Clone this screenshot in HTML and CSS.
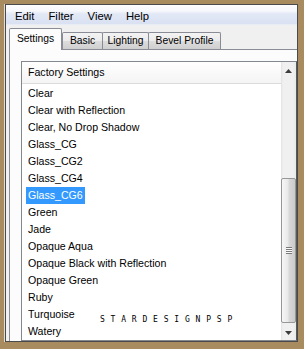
FILE: index.html
```html
<!DOCTYPE html>
<html>
<head>
<meta charset="utf-8">
<link rel="stylesheet" href="styles.css">
</head>
<body>
<div class="frame">
  <div class="win">
    <div class="menubar">
      <span>Edit</span><span>Filter</span><span>View</span><span>Help</span>
    </div>
    <div class="tabs">
      <div class="tab sel t-settings">Settings</div>
      <div class="tab t-basic">Basic</div>
      <div class="tab t-lighting">Lighting</div>
      <div class="tab t-bevel">Bevel Profile</div>
    </div>
    <div class="panel">
      <div class="listbox">
        <div class="listcol">
          <div class="header">Factory Settings</div>
          <ul class="items">
            <li><span>Clear</span></li>
            <li><span>Clear with Reflection</span></li>
            <li><span>Clear, No Drop Shadow</span></li>
            <li><span>Glass_CG</span></li>
            <li><span>Glass_CG2</span></li>
            <li><span>Glass_CG4</span></li>
            <li class="sel"><span>Glass_CG6</span></li>
            <li><span>Green</span></li>
            <li><span>Jade</span></li>
            <li><span>Opaque Aqua</span></li>
            <li><span>Opaque Black with Reflection</span></li>
            <li><span>Opaque Green</span></li>
            <li><span>Ruby</span></li>
            <li><span>Turquoise</span></li>
            <li><span>Watery</span></li>
          </ul>
        </div>
        <div class="scrollbar">
          <div class="sbtn up">
            <svg width="7" height="4" viewBox="0 0 7 4"><polygon points="0,4 3.5,0 7,4" fill="#3c3c3c"/></svg>
          </div>
          <div class="track">
            <div class="thumb"><div class="grip"></div></div>
          </div>
          <div class="sbtn down">
            <svg width="7" height="4" viewBox="0 0 7 4"><polygon points="0,0 7,0 3.5,4" fill="#3c3c3c"/></svg>
          </div>
        </div>
      </div>
    </div>
    <div class="watermark">STARDESIGNPSP</div>
  </div>
</div>
</body>
</html>
```
FILE: styles.css
```css
body {
  margin: 0;
}

.frame {
  width: 304px;
  height: 349px;
  box-sizing: border-box;
  padding: 4px 6px 7px 5px;
  background: #a88c60;
}

.win {
  height: 100%;
  box-sizing: border-box;
  border: 1px solid #4a4a4a;
  background: #f0f0f0;
  position: relative;
  overflow: hidden;
  display: flex;
  flex-direction: column;
  box-shadow: -1px 0 0 #e4ddcf;
  font-family: "Liberation Sans", Arial, sans-serif;
  color: #000;
}

.menubar {
  flex: none;
  height: 20px;
  display: flex;
  gap: 14px;
  padding-left: 9px;
  font-size: 11.3px;
  line-height: 22px;
  background: linear-gradient(to bottom, #fdfdfe 0%, #f5f7fb 30%, #e2e8f5 45%, #d9e1f2 92%, #eef0f4 100%);
}

.tabs {
  flex: none;
  height: 25px;
  margin-bottom: -1px;
  display: flex;
  align-items: flex-end;
  padding-left: 3px;
  position: relative;
  z-index: 1;
  font-size: 10.3px;
}

.tab {
  box-sizing: border-box;
  height: 17px;
  margin-bottom: 1px;
  border: 1px solid #898c95;
  border-bottom: none;
  border-radius: 2px 2px 0 0;
  line-height: 16px;
  text-align: center;
  white-space: nowrap;
  background: linear-gradient(to bottom, #f3f3f3 0%, #ebebeb 50%, #dddddd 50%, #cfcfcf 100%);
}

.tab.sel {
  height: 22px;
  margin-bottom: 0;
  line-height: 20px;
  background: #fcfcfc;
}

.t-settings { width: 53px; }
.t-basic { width: 41px; }
.t-lighting { width: 47px; margin-left: -1px; }
.t-bevel { width: 73px; margin-left: -1px; }

.panel {
  flex: 1;
  min-height: 0;
  margin-left: 3px;
  border-top: 1px solid #898c95;
  border-left: 1px solid #898c95;
  background: #fcfcfc;
  padding: 11px 0 0 11px;
  display: flex;
  flex-direction: column;
}

.listbox {
  flex: 1;
  min-height: 0;
  border: 1px solid #828790;
  border-right-color: #5a5a5a;
  background: #fff;
  display: flex;
  overflow: hidden;
  font-size: 10.6px;
}

.listcol {
  flex: 1;
  min-width: 0;
  display: flex;
  flex-direction: column;
  overflow: hidden;
}

.header {
  flex: none;
  height: 21px;
  line-height: 21px;
  padding-left: 6px;
  border-bottom: 1px solid #dcdcdc;
  background: linear-gradient(to bottom, #ffffff, #f4f4f4);
}

.items {
  list-style: none;
  margin: 0;
  padding: 1px 0 0;
}

.items li {
  height: 17px;
  line-height: 17px;
  white-space: nowrap;
}

.items li span {
  display: inline-block;
  height: 17px;
  margin-left: 4px;
  padding: 0 2px;
}

.items li.sel span {
  background: #3399ff;
  color: #fff;
}

.scrollbar {
  flex: none;
  width: 15px;
  display: flex;
  flex-direction: column;
  background: linear-gradient(to right, #e2e2e2 0, #f0f0f0 2px, #f0f0f0 12px, #e9e9e9 100%);
}

.sbtn {
  flex: none;
  height: 17px;
  display: flex;
  align-items: center;
  justify-content: center;
}

.sbtn svg {
  display: block;
}

.sbtn.down {
  box-sizing: border-box;
  padding-top: 3px;
}

.track {
  flex: 1;
  min-height: 0;
  display: flex;
  flex-direction: column;
  justify-content: flex-end;
}

.thumb {
  height: 145px;
  box-sizing: border-box;
  border: 1px solid #979797;
  border-radius: 2px;
  background: linear-gradient(to right, #f7f7f7 0%, #e9e9e9 45%, #d8d8d8 55%, #cbcbcb 100%);
  display: flex;
  align-items: center;
  justify-content: center;
}

.grip {
  width: 6px;
  height: 7px;
  background: repeating-linear-gradient(to bottom, #7a7a7a 0, #7a7a7a 1px, #fafafa 1px, #fafafa 2px);
}

.watermark {
  position: absolute;
  left: 94px;
  top: 311px;
  z-index: 2;
  font-family: "DejaVu Sans Mono", monospace;
  font-size: 8px;
  line-height: 8px;
  letter-spacing: 5.8px;
  color: #000;
}
```
